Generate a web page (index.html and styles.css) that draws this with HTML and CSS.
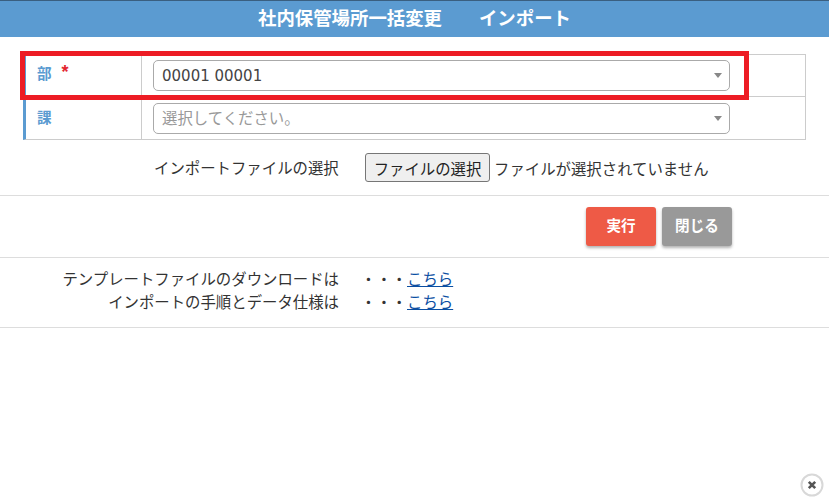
FILE: index.html
```html
<!DOCTYPE html>
<html lang="ja">
<head>
<meta charset="utf-8">
<title>社内保管場所一括変更 インポート</title>
<link rel="stylesheet" href="styles.css">
</head>
<body>
<header class="title"><span>社内保管場所一括変更</span><span>インポート</span></header>
<section class="form">
  <div class="row first">
    <div class="label">部<span class="req">*</span></div>
    <div class="field"><div class="select"><span class="value">00001 00001</span><i class="arrow"></i></div></div>
  </div>
  <div class="row">
    <div class="label">課</div>
    <div class="field"><div class="select placeholder"><span class="hint">選択してください。</span><i class="arrow"></i></div></div>
  </div>
</section>
<section class="file">
  <div class="file-label">インポートファイルの選択</div>
  <button class="file-btn" type="button">ファイルの選択</button>
  <div class="file-name">ファイルが選択されていません</div>
</section>
<section class="actions">
  <button class="btn run" type="button">実行</button>
  <button class="btn close" type="button">閉じる</button>
</section>
<section class="links">
  <div class="link-row"><div class="link-label">テンプレートファイルのダウンロードは</div><div class="dots">・・・</div><a href="#">こちら</a></div>
  <div class="link-row"><div class="link-label">インポートの手順とデータ仕様は</div><div class="dots">・・・</div><a href="#">こちら</a></div>
</section>
<div class="highlight"></div>
<div class="close-x"><svg width="24" height="24" viewBox="0 0 24 24"><circle cx="12" cy="12" r="10.5" fill="#fff" stroke="#d8d8d8" stroke-width="2"/><path d="M8.8 8.8l6.4 6.4M15.2 8.8l-6.4 6.4" stroke="#555" stroke-width="2.6" fill="none"/></svg></div>
</body>
</html>
```
FILE: styles.css
```css
* { box-sizing: border-box; }
html, body { height: 100%; }
body {
  margin: 0;
  position: relative;
  overflow: hidden;
  background: #fff;
  color: #333;
  font-family: "Noto Sans CJK JP", "Liberation Sans", sans-serif;
  font-size: 15.4px;
}
.title {
  height: 37px;
  background: #5b9bd1;
  border-top: 1px solid #3a5f80;
  color: #fff;
  font-size: 18.4px;
  font-weight: 700;
  display: flex;
  justify-content: center;
  gap: 37px;
  align-items: center;
  padding-bottom: 5px;
}
.form {
  margin: 17px 23px 0;
  border-top: 1px solid #ccc;
  border-right: 1px solid #ccc;
}
.row {
  display: flex;
  height: 43px;
  border-bottom: 1px solid #ccc;
  border-left: 3px solid #5b9bd1;
}
.row.first { height: 42px; }
.label {
  width: 116px;
  padding: 0 0 6px 11px;
  display: flex;
  align-items: center;
  color: #5b9bd1;
  font-size: 14.6px;
  font-weight: 700;
  border-right: 1px solid #ccc;
}
.row:not(.first) .label { padding-bottom: 3px; }
.req {
  color: #e3262e;
  margin-left: 10px;
  font-family: "Liberation Sans", sans-serif;
  font-size: 18px;
}
.field {
  flex: 1;
  padding: 6px 0 0 11px;
}
.first .field { padding-top: 5px; }
.select {
  width: 577px;
  height: 31px;
  border: 1px solid #aaa;
  border-radius: 5px;
  padding: 0 8px;
  display: flex;
  align-items: center;
  justify-content: space-between;
  font-size: 14.6px;
  color: #444;
  background: #fff;
}
.value {
  font-family: "DejaVu Sans", sans-serif;
  font-size: 15px;
}
.hint {
  font-size: 15.4px;
  padding-bottom: 3px;
}
.select.placeholder { color: #999; }
.arrow {
  width: 0;
  height: 0;
  border-left: 4px solid transparent;
  border-right: 4px solid transparent;
  border-top: 5px solid #888;
  margin-right: -1px;
}
.file {
  display: flex;
  align-items: center;
  height: 56px;
  border-bottom: 1px solid #ddd;
}
.file-label {
  margin-left: 154px;
  width: 211px;
  padding-bottom: 2px;
}
.file-btn {
  width: 125px;
  height: 29px;
  padding: 0;
  border: 1px solid #767676;
  border-radius: 3px;
  background: #efefef;
  color: #222;
  font: inherit;
}
.file-name { margin-left: 4px; }
.actions {
  display: flex;
  gap: 6px;
  height: 62px;
  padding: 11px 0 0 586px;
  border-bottom: 1px solid #ddd;
}
.btn {
  width: 70px;
  height: 39px;
  padding: 0 0 4px;
  border: 0;
  border-radius: 3px;
  color: #fff;
  font: inherit;
  font-size: 14.6px;
  font-weight: 700;
  box-shadow: 0 2px 3px rgba(0, 0, 0, .3);
}
.run { background: #ee5a46; }
.close { background: #999; }
.links {
  height: 70px;
  padding-top: 9px;
  border-bottom: 1px solid #ddd;
}
.link-row {
  display: flex;
  height: 23px;
  line-height: 23px;
}
.link-label {
  width: 339px;
  text-align: right;
}
.dots {
  width: 68px;
  text-align: right;
  white-space: nowrap;
}
a { color: #0b4ea2; }
.highlight {
  position: absolute;
  left: 20px;
  top: 51px;
  width: 729px;
  height: 49px;
  border: 5px solid #ed1c24;
}
.close-x {
  position: absolute;
  left: 800px;
  top: 473px;
  width: 24px;
  height: 24px;
}
```
